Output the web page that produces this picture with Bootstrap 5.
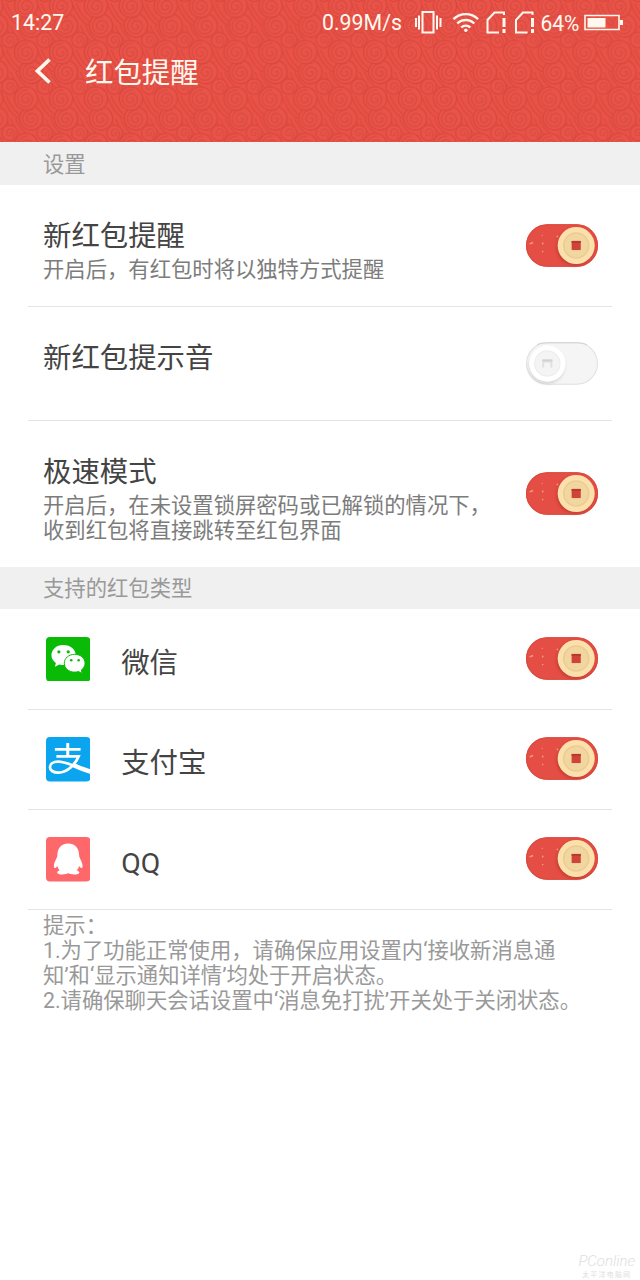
<!DOCTYPE html>
<html lang="zh-CN">
<head>
<meta charset="utf-8">
<meta name="viewport" content="width=device-width, initial-scale=1">
<title>红包提醒</title>
<link href="https://cdn.jsdelivr.net/npm/bootstrap@5.3.0/dist/css/bootstrap.min.css" rel="stylesheet">
<style>
body{font-family:Roboto,"Noto Sans CJK SC",sans-serif;font-size:21.33px;line-height:25px;color:#7c7c7c;background:#fff;min-height:1280px;position:relative}
.hero{height:142px;color:#fff8ef;background:#e74f44;position:relative}
.hero>svg.swirls{position:absolute;inset:0;width:100%;height:142px}
.status-bar{height:45px;padding:0 15px 0 11px;position:relative}
.title-bar{height:55px;padding-left:34px;position:relative}
.title-bar h1{font-size:28.4px;line-height:34px;font-weight:400;margin:0 0 0 33px;padding-top:2px}
.section-label{height:43px;line-height:45px;padding-left:43px;background:#f0f0f0;color:#999}
.section-label.types{height:42px;line-height:44px}
.setting{margin:0 28px;padding:0 13px 0 15px;border-bottom:1px solid #e4e4e4;display:flex;justify-content:space-between}
.setting h2{font-size:28.4px;line-height:34px;font-weight:400;color:#444;margin:0}
.setting p{margin:0}
.setting .toggle{flex:none;width:74px;height:45px}
.app-icon{width:44.5px;height:44.5px;flex:none}
.app-name{padding-left:2.7px}
.setting .app-name h2{margin-left:31px;padding-top:9px}
.tips{padding:3px 43px 0;color:#999}
.watermark{position:absolute;right:5px;bottom:2px;text-align:center;color:#dedede;font:italic 300 15px/13px Roboto,sans-serif}
.watermark small{display:block;font:400 7px/8px "Noto Sans CJK SC",sans-serif;letter-spacing:1.2px;margin-top:2px}
</style>
</head>
<body>
<svg width="0" height="0" class="position-absolute">
  <defs>
    <radialGradient id="coin"><stop offset=".6" stop-color="#f1d6a0"/><stop offset=".68" stop-color="#e8ca90"/><stop offset=".74" stop-color="#fbe0ac"/><stop offset="1" stop-color="#fce1ad"/></radialGradient>
    <filter id="soft" x="-30%" y="-30%" width="160%" height="160%"><feGaussianBlur stdDeviation="1.5"/></filter>
    <symbol id="on" viewBox="0 0 73 44">
      <rect x="1" y="1" width="71" height="42" rx="21" fill="#e54e44"/>
      <rect x="1.5" y="1.5" width="70" height="41" rx="20.5" fill="none" stroke="#d9493f"/>
      <circle cx="49.500" cy="23.500" r="18.500" fill="#9e2c20" opacity=".45" filter="url(#soft)"/>
      <circle cx="50.500" cy="22" r="18.300" fill="url(#coin)"/>
      <path d="M46 17.500h9v9h-9z" fill="#cf4338"/><path d="M46 17.500h9v2h-9z" fill="#b9392f"/>
      <g fill="#f39b70"><path d="M4 20l4-2v2l-3 1z"/><circle cx="17.500" cy="20" r=".9"/><circle cx="17.500" cy="28" r=".8"/><circle cx="32" cy="13" r=".9"/><circle cx="17" cy="12" r=".6"/></g>
    </symbol>
  </defs>
</svg>

<header class="hero">
  <svg class="swirls" aria-hidden="true">
    <defs>
      <g id="big" fill="none"><circle r="11.600" fill="#e85449" stroke="#db473d" stroke-width="1.300"/><path d="M0 0.500C1.500-2 4 1 2 3C-1 6-5 3-4.300-.5C-3.500-5.500 3-6.500 5.500-2.500C8.500 3 4 8.500-1 8.200C-7 8-9.500 2-8-2.500C-6.500-7-2-9 2-8.500" stroke="#dd4a40" stroke-width="1.400"/></g>
      <g id="little" fill="none"><circle r="7.800" fill="#e85449" stroke="#db473d" stroke-width="1.200"/><path d="M0 0c2-1 3 2 0 3C-4 3-4-3 0-4C5-4 6 2 3 5" stroke="#dd4a40" stroke-width="1.200"/></g>
      <pattern id="clouds" x="445" y="72" width="34.900" height="46.400" patternUnits="userSpaceOnUse">
        <rect width="36" height="47" fill="#e85247"/>
        <g fill="none" stroke="#dc493f" stroke-width="1.200"><path d="M14-4C18 10 22 20 34 24M18-4C22 8 26 16 36 19M23-4C26 6 30 12 36 15M11 24C15 34 20 44 30 48M15 24C19 34 24 42 34 46"/></g>
        <use href="#little" x="18.500" y="14.500"/>
        <use href="#big" x="5" y="0"/><use href="#big" x="5" y="46.400"/><use href="#big" x="39.900" y="0"/><use href="#big" x="39.900" y="46.400"/>
        <use href="#big" x="0" y="26.500"/><use href="#big" x="34.900" y="26.500"/>
      </pattern>
    </defs>
    <rect width="640" height="142" fill="url(#clouds)"/>
  </svg>
  <div class="status-bar d-flex align-items-center">
    <span>14:27</span>
    <span class="ms-auto">0.99M/s</span>
    <svg width="222" height="30" viewBox="402 7 222 30" fill="none" stroke="#fff8ef" stroke-width="2" style="margin-right:1px">
      <path d="M422.500 11h11v20.500h-11zM419 14.500v14M416 17v9M437 14.500v14M440.500 17v9"/>
      <g stroke-width="2.400"><path d="M453.500 18.200a17.500 17.500 0 0 1 24.600 0M457.300 22.500a12 12 0 0 1 17 0M461.200 26.500a6.500 6.500 0 0 1 9.200 0"/></g>
      <circle cx="465.800" cy="29.300" r="1.700" fill="#fff8ef" stroke="none"/>
      <g id="sim"><path d="M499 31.500h-11.500V19l7-7.500h9.500v2.500"/><path d="M504 17v9M504 28v4" stroke-width="3"/></g>
      <use href="#sim" x="28.500"/>
      <text x="540.500" y="30" font-size="21.330" fill="#fff8ef" stroke="none" textLength="39" lengthAdjust="spacingAndGlyphs">64%</text>
      <path d="M585 14.500h34v14h-34z" stroke-width="1.600"/><path d="M587.500 17h18v9.500h-18zM620 19h3v5h-3z" fill="#fff8ef" stroke="none"/>
    </svg>
  </div>
  <div class="title-bar d-flex align-items-center">
    <svg width="18" height="28" viewBox="0 0 18 28" fill="none" stroke="#fff8ef" stroke-width="3.800" style="margin-top:-3px"><path d="M15.500 2.500L3.500 14l12 11.500"/></svg>
    <h1>红包提醒</h1>
  </div>
</header>

<main>
  <div class="section-label">设置</div>
  <div class="setting" style="height:122px">
    <div style="padding-top:35px"><h2>新红包提醒</h2><p style="margin-top:3px">开启后，有红包时将以独特方式提醒</p></div>
    <svg class="toggle" style="margin-top:38px"><use href="#on"/></svg>
  </div>
  <div class="setting" style="height:114px">
    <div style="padding-top:35px"><h2>新红包提示音</h2></div>
    <svg class="toggle" viewBox="0 0 73 44" style="margin-top:34px">
      <rect x="1.500" y="1.500" width="70" height="41" rx="20.500" fill="#f5f5f5" stroke="#e0e0e0"/><path d="M12 3.500Q15 1.500 22 1.500H51Q58 1.500 61 3.500" fill="none" stroke="#d2d2d2"/>
      <circle cx="21.500" cy="24" r="18" fill="#aaa" opacity=".4" filter="url(#soft)"/>
      <circle cx="22" cy="22" r="18" fill="#fff"/><circle cx="22" cy="22" r="12.500" fill="#f4f4f4" stroke="#ececec"/>
      <path d="M17 18h10v8h-2v-5h-6v5h-2z" fill="#e0e0e0"/><path d="M17 18h10v2h-10z" fill="#d2d2d2"/>
    </svg>
  </div>
  <div class="setting border-0" style="height:146px">
    <div style="padding-top:35px"><h2>极速模式</h2><p class="text-nowrap" style="margin-top:3px">开启后，在未设置锁屏密码或已解锁的情况下，<br>收到红包将直接跳转至红包界面</p></div>
    <svg class="toggle" style="margin-top:50px"><use href="#on"/></svg>
  </div>
  <div class="section-label types">支持的红包类型</div>
  <div class="setting" style="height:101px">
    <div class="app-name d-flex align-items-center">
      <svg class="app-icon" viewBox="0 0 45 45"><rect width="45" height="45" rx="4" fill="#09bb07"/><path d="M17.500 8C10 8 5.500 13 5.500 18.300c0 3.400 1.700 6 4.500 7.900l-1 4 4.500-2.300c1.500.4 2.800.5 4.500.5C25 28 30 24 30 18.300 30 12.500 25 8 17.500 8z" fill="#fff"/><path d="M29 17.500c-6 0-10.500 4-10.500 9s4.500 9 10.500 9c1.400 0 2.500-.2 3.800-.6l3.800 2-.9-3.500c2.300-1.700 3.800-4 3.800-6.900 0-5-4.500-9-10.500-9z" fill="#fff" stroke="#09bb07"/><g fill="#09bb07"><circle cx="13" cy="15" r="1.600"/><circle cx="22.500" cy="15" r="1.600"/><circle cx="25.500" cy="23.500" r="1.300"/><circle cx="33" cy="23.500" r="1.300"/></g></svg>
      <h2>微信</h2>
    </div>
    <svg class="toggle" style="margin-top:27px"><use href="#on"/></svg>
  </div>
  <div class="setting" style="height:100px">
    <div class="app-name d-flex align-items-center">
      <svg class="app-icon" viewBox="0 0 45 45"><rect width="45" height="45" rx="4" fill="#0aa5ee"/><g fill="none" stroke="#fff"><path d="M9 12.500h26M22 6v14" stroke-width="3"/><path d="M10.500 19.500H33C30 27 22 36 12.500 36 7 36 4 33.500 4 30.500S7 25 12 25C22 25 32 31.500 45 35.500" stroke-width="2.800"/><path d="M28 28.500C34 31.500 39 33 45 35" stroke-width="4.500"/></g></svg>
      <h2>支付宝</h2>
    </div>
    <svg class="toggle" style="margin-top:26px"><use href="#on"/></svg>
  </div>
  <div class="setting" style="height:100px">
    <div class="app-name d-flex align-items-center">
      <svg class="app-icon" viewBox="0 0 45 45"><rect width="45" height="45" rx="4" fill="#ff686b"/><path d="M22.500 6.500C15 6.500 11.500 12 11.500 18.500c0 3-3.500 6.500-3.500 11 0 2.500 1.500 2.500 3.500-.2.500 2 1.300 3.200 2.500 4.400-2 .7-2.700 1.600-2.700 2.500C11.500 38.500 20 38.500 22.500 36.500c2.500 2 11 2 11.200-.3 0-.9-.7-1.800-2.700-2.500 1.200-1.200 2-2.400 2.500-4.400 2 2.700 3.500 2.700 3.500.2 0-4.500-3.500-8-3.500-11 0-6.500-3.500-12-11-12z" fill="#fff"/></svg>
      <h2>QQ</h2>
    </div>
    <svg class="toggle" style="margin-top:26px"><use href="#on"/></svg>
  </div>
  <div class="tips">提示：<br>1.为了功能正常使用，请确保应用设置内‘接收新消息通<br>知’和‘显示通知详情’均处于开启状态。<br><span class="text-nowrap">2.请确保聊天会话设置中‘消息免打扰’开关处于关闭状态。</span></div>
</main>
<div class="watermark">PConline<small>太平洋电脑网</small></div>
<script src="https://cdn.jsdelivr.net/npm/bootstrap@5.3.0/dist/js/bootstrap.bundle.min.js"></script>
</body>
</html>
